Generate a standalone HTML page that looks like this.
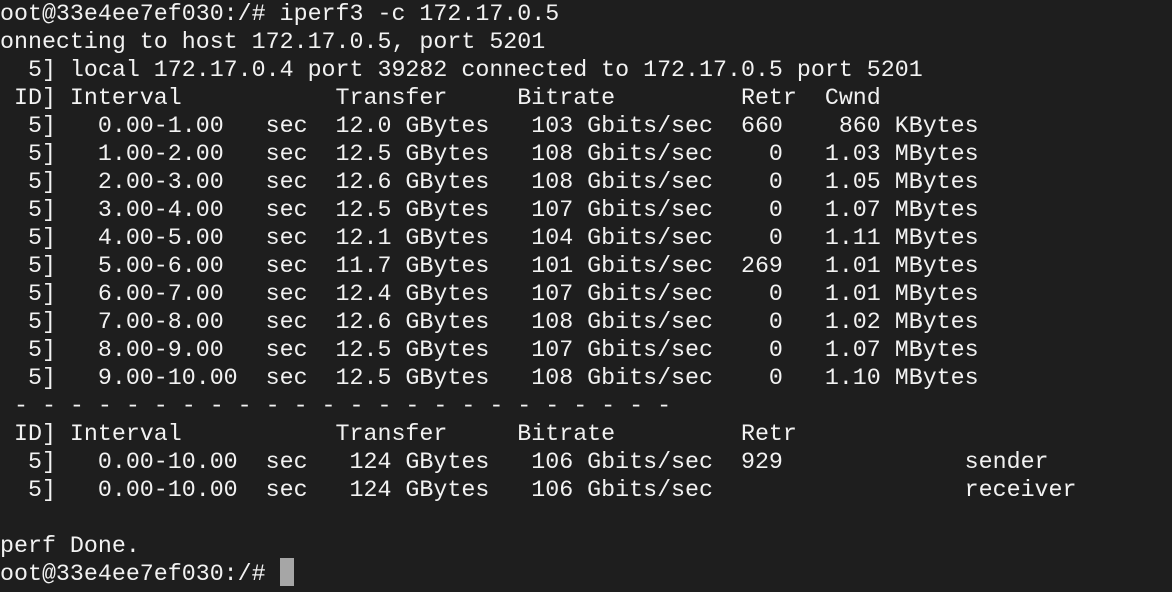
<!DOCTYPE html>
<html><head><meta charset="utf-8"><style>
html,body{margin:0;padding:0;background:#1e1e1e;width:1172px;height:592px;overflow:hidden}
pre{margin:0;position:absolute;left:0;top:0px;font-family:"Liberation Mono",monospace;font-size:23.3px;line-height:28px;color:#f2f2f2}
.cur{position:absolute;left:280px;top:558px;width:14px;height:28px;background:#a6a6a6}
</style></head><body>
<pre>oot@33e4ee7ef030:/# iperf3 -c 172.17.0.5
onnecting to host 172.17.0.5, port 5201
  5] local 172.17.0.4 port 39282 connected to 172.17.0.5 port 5201
 ID] Interval           Transfer     Bitrate         Retr  Cwnd
  5]   0.00-1.00   sec  12.0 GBytes   103 Gbits/sec  660    860 KBytes
  5]   1.00-2.00   sec  12.5 GBytes   108 Gbits/sec    0   1.03 MBytes
  5]   2.00-3.00   sec  12.6 GBytes   108 Gbits/sec    0   1.05 MBytes
  5]   3.00-4.00   sec  12.5 GBytes   107 Gbits/sec    0   1.07 MBytes
  5]   4.00-5.00   sec  12.1 GBytes   104 Gbits/sec    0   1.11 MBytes
  5]   5.00-6.00   sec  11.7 GBytes   101 Gbits/sec  269   1.01 MBytes
  5]   6.00-7.00   sec  12.4 GBytes   107 Gbits/sec    0   1.01 MBytes
  5]   7.00-8.00   sec  12.6 GBytes   108 Gbits/sec    0   1.02 MBytes
  5]   8.00-9.00   sec  12.5 GBytes   107 Gbits/sec    0   1.07 MBytes
  5]   9.00-10.00  sec  12.5 GBytes   108 Gbits/sec    0   1.10 MBytes
 - - - - - - - - - - - - - - - - - - - - - - - -
 ID] Interval           Transfer     Bitrate         Retr
  5]   0.00-10.00  sec   124 GBytes   106 Gbits/sec  929             sender
  5]   0.00-10.00  sec   124 GBytes   106 Gbits/sec                  receiver

perf Done.
oot@33e4ee7ef030:/# </pre>
<div class="cur"></div>
</body></html>
